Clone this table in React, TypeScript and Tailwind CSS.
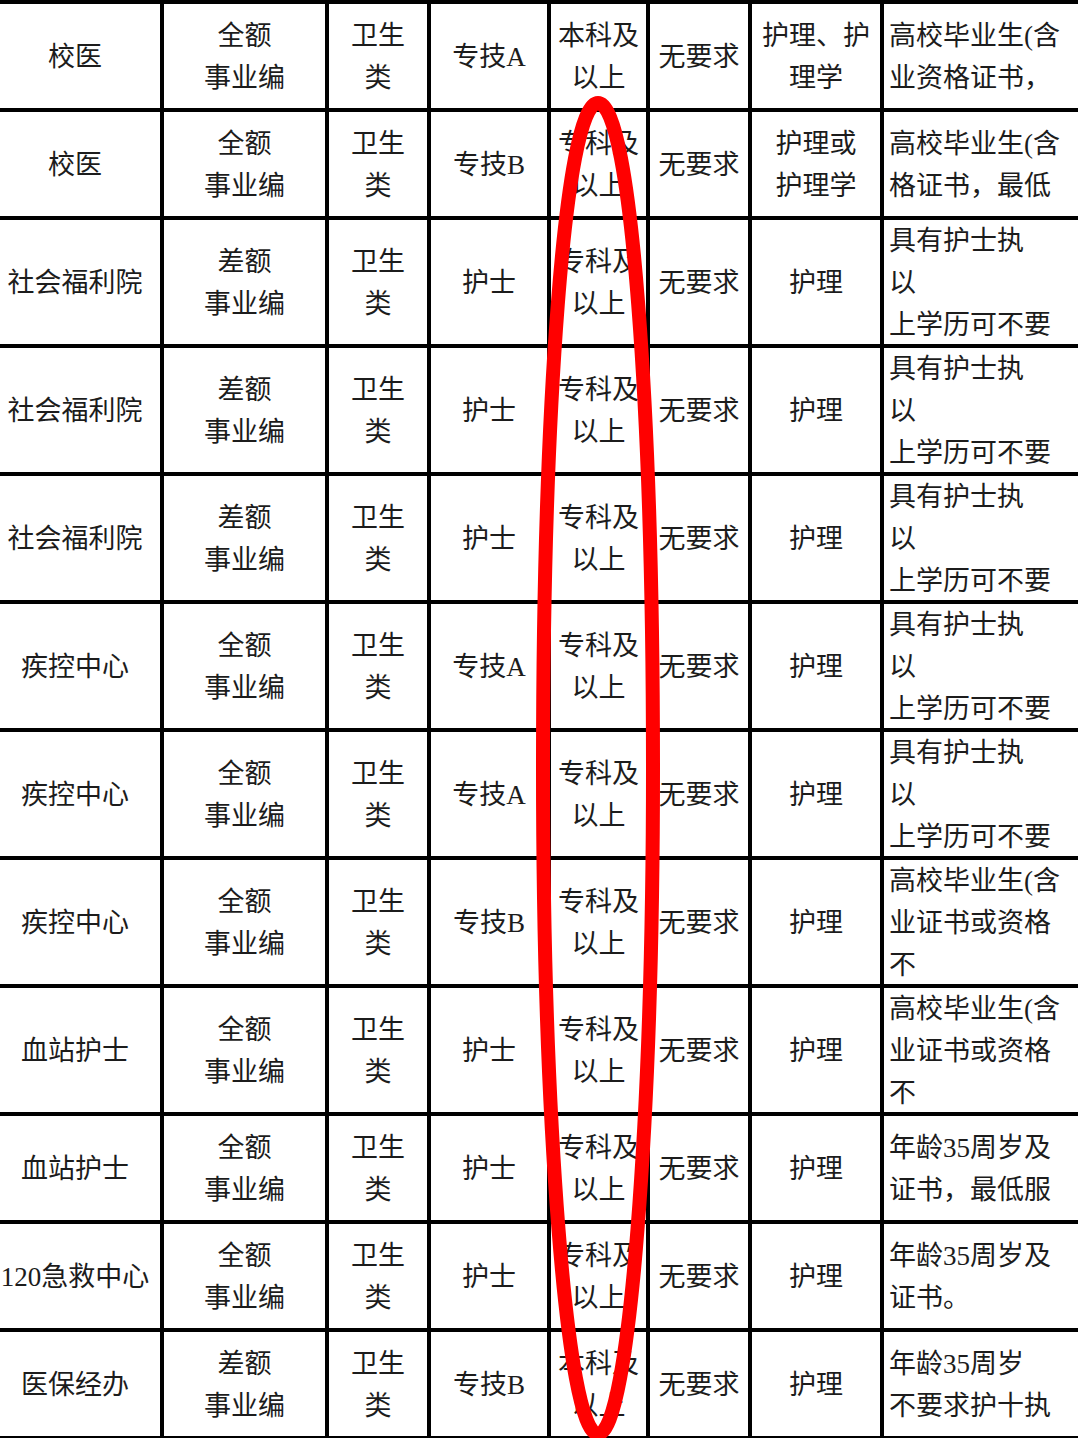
const FONT = "font-['Liberation_Serif','Noto_Sans_CJK_SC',serif]";

type Row = { h: "short" | "tall"; cells: string[] };

// cells: unit / funding / category / post / education / age / major / notes ("/" = line break)
const rows: Row[] = [
  { h: "short", cells: ["校医", "全额/事业编", "卫生/类", "专技A", "本科及/以上", "无要求", "护理、护/理学", "高校毕业生(含/业资格证书，"] },
  { h: "short", cells: ["校医", "全额/事业编", "卫生/类", "专技B", "专科及/以上", "无要求", "护理或/护理学", "高校毕业生(含/格证书，最低"] },
  { h: "tall", cells: ["社会福利院", "差额/事业编", "卫生/类", "护士", "专科及/以上", "无要求", "护理", "具有护士执/以/上学历可不要"] },
  { h: "tall", cells: ["社会福利院", "差额/事业编", "卫生/类", "护士", "专科及/以上", "无要求", "护理", "具有护士执/以/上学历可不要"] },
  { h: "tall", cells: ["社会福利院", "差额/事业编", "卫生/类", "护士", "专科及/以上", "无要求", "护理", "具有护士执/以/上学历可不要"] },
  { h: "tall", cells: ["疾控中心", "全额/事业编", "卫生/类", "专技A", "专科及/以上", "无要求", "护理", "具有护士执/以/上学历可不要"] },
  { h: "tall", cells: ["疾控中心", "全额/事业编", "卫生/类", "专技A", "专科及/以上", "无要求", "护理", "具有护士执/以/上学历可不要"] },
  { h: "tall", cells: ["疾控中心", "全额/事业编", "卫生/类", "专技B", "专科及/以上", "无要求", "护理", "高校毕业生(含/业证书或资格/不"] },
  { h: "tall", cells: ["血站护士", "全额/事业编", "卫生/类", "护士", "专科及/以上", "无要求", "护理", "高校毕业生(含/业证书或资格/不"] },
  { h: "short", cells: ["血站护士", "全额/事业编", "卫生/类", "护士", "专科及/以上", "无要求", "护理", "年龄35周岁及/证书，最低服"] },
  { h: "short", cells: ["120急救中心", "全额/事业编", "卫生/类", "护士", "专科及/以上", "无要求", "护理", "年龄35周岁及/证书。"] },
  { h: "short", cells: ["医保经办", "差额/事业编", "卫生/类", "专技B", "本科及/以上", "无要求", "护理", "年龄35周岁/不要求护十执"] },
];

function Cell({ text, col, tall }: { text: string; col: number; tall: boolean }) {
  const lines = text.split("/");
  let align = "justify-center text-center";
  if (col === 7) align = "justify-start pl-[5px] text-left";
  if (col === 0) align = "justify-center text-center pr-[10px]";
  return (
    <div
      className={
        "bg-white flex items-center overflow-hidden whitespace-nowrap pt-[2px] " +
        (tall ? "h-[124px] " : "h-[104px] ") +
        align
      }
    >
      <div className="leading-[42px]">
        {lines.map((l, i) => (
          <div key={i}>{l}</div>
        ))}
      </div>
    </div>
  );
}

function Ellipse() {
  // hand drawn red ring around the education column
  return (
    <svg className="absolute left-0 top-0 pointer-events-none" width="1078" height="1438" viewBox="0 0 1078 1438">
      <path
        d="M598 103 C632 103 653 420 653 768 C653 1110 630 1434 598 1434 C566 1434 543 1110 543 768 C543 420 564 103 598 103 Z"
        fill="none"
        stroke="#ff0000"
        strokeWidth="14"
      />
    </svg>
  );
}

export default function App() {
  return (
    <div className={"relative w-[1078px] h-[1438px] overflow-hidden bg-white text-[27px] text-[#1c1c1c] " + FONT}>
      <div className="grid grid-cols-[160px_161px_98px_116px_95px_98px_128px_194px] gap-[4px] bg-black pt-[4px] pb-[4px]">
        {rows.map((r, ri) =>
          r.cells.map((c, ci) => (
            <Cell key={ri + "-" + ci} text={c} col={ci} tall={r.h === "tall"} />
          ))
        )}
      </div>
      <Ellipse />
    </div>
  );
}
